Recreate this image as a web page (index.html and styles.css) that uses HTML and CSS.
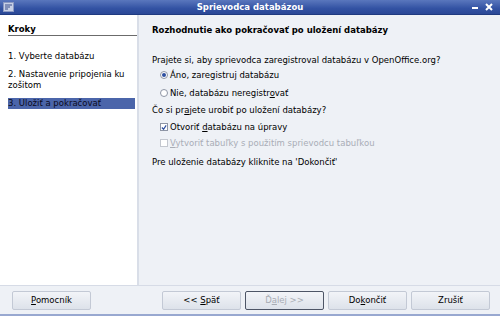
FILE: index.html
```html
<!DOCTYPE html>
<html>
<head>
<meta charset="utf-8">
<link rel="stylesheet" href="styles.css">
</head>
<body>
<div class="window">
  <div class="titlebar">
    <div class="appicon">
      <svg width="11" height="10" viewBox="0 0 11 10"><rect x="0.5" y="0.5" width="10" height="9" fill="#c7d0e6" stroke="#8b99c2"/><path d="M2 3h7M2 5h5M2 7h3" stroke="#3a4f8c" stroke-width="1"/></svg>
    </div>
    <div class="title">Sprievodca databázou</div>
    <div class="controls">
      <span class="min"></span>
      <svg width="8" height="8" viewBox="0 0 8 8"><path d="M1 1L7 7M7 1L1 7" stroke="#fff" stroke-width="2"/></svg>
    </div>
  </div>
  <div class="main">
    <div class="sidebar">
      <div class="steps-title">Kroky</div>
      <div class="step">1. Vyberte databázu</div>
      <div class="step">2. Nastavenie pripojenia ku<br>zošitom</div>
      <div class="step active">3. Uložiť a pokračovať</div>
    </div>
    <div class="content">
      <div class="heading">Rozhodnutie ako pokračovať po uložení databázy</div>
      <div class="q q1">Prajete si, aby sprievodca zaregistroval databázu v OpenOffice.org?</div>
      <div class="opt o1"><span class="radio on"></span><span>Áno, zaregistruj databázu</span></div>
      <div class="opt o2"><span class="radio"></span><span>Nie, databázu neregistr<u>o</u>vať</span></div>
      <div class="q q2">Čo si pr<u>a</u>jete urobiť po uložení databázy?</div>
      <div class="opt o3"><span class="check on"><svg width="7" height="7" viewBox="0 0 7 7"><path d="M1 3.5L3 5.5L6 1" stroke="#2d4fa0" stroke-width="1.4" fill="none"/></svg></span><span>Otvoriť <u>d</u>atabázu na úpravy</span></div>
      <div class="opt o4 disabled"><span class="check"></span><span><u>V</u>ytvoriť tabuľky s použitím sprievodcu tabuľkou</span></div>
      <div class="q q3">Pre uloženie databázy kliknite na 'Dokončiť'</div>
    </div>
  </div>
  <div class="footer">
    <button class="btn"><u>P</u>omocník</button>
    <div class="spacer"></div>
    <button class="btn">&lt;&lt; <u>S</u>päť</button>
    <button class="btn focused disabled">Ď<u>a</u>lej &gt;&gt;</button>
    <button class="btn">Do<u>k</u>ončiť</button>
    <button class="btn">Zrušiť</button>
  </div>
</div>
</body>
</html>
```
FILE: styles.css
```css
* { box-sizing: border-box; }
html, body { margin: 0; padding: 0; }
body {
  width: 500px; height: 316px; overflow: hidden;
  font-family: "DejaVu Sans", sans-serif;
  font-size: 8.5px;
  color: #000;
  background: #eef1f6;
}
.window { width: 500px; height: 316px; display: flex; flex-direction: column; border-bottom: 2px solid #98a8d0; }
.titlebar {
  height: 15px; flex: none;
  background: linear-gradient(#5a77bd, #3352a3 60%, #2a4896);
  display: flex; align-items: center; color: #fff;
  border-bottom: 1px solid #1f3a80;
}
.appicon { width: 20px; padding-left: 3px; display: flex; align-items: center; }
.title { flex: 1; text-align: center; font-weight: bold; font-size: 8.5px; padding-left: 8px; }
.controls { width: 28px; display: flex; align-items: center; gap: 7px; padding-right: 4px; }
.min { width: 6px; height: 2px; background: #fff; margin-top: 2px; }
.main { flex: 1; display: flex; border-bottom: 1px solid #d6dbe6; }
.sidebar {
  width: 139px; flex: none; background: #fff;
  border-right: 2px solid #d9dee8;
  padding: 9px 0 0 8px;
}
.steps-title {
  font-weight: bold; border-bottom: 1px solid #6b6b6b;
  padding-bottom: 0; margin-bottom: 15px; line-height: 11px;
}
.step { line-height: 11px; margin-bottom: 7px; margin-right: 2px; }
.step.active { background: #4b65aa; color: #0a0a20; }
.content { flex: 1; padding: 9px 10px 0 13px; }
.heading { font-weight: bold; line-height: 12px; }
.q { line-height: 12px; }
.q1 { margin-top: 18px; margin-bottom: 1px; }
.q2 { margin-top: 3px; margin-bottom: 3px; }
.q3 { margin-top: 5px; }
.opt { display: flex; align-items: center; line-height: 16px; padding-left: 8px; }
.o1 { margin-bottom: 2px; }
.opt.disabled { color: #a9adb6; }
.radio {
  width: 8px; height: 8px; border-radius: 50%; border: 1px solid #8e95a5; background: #fff;
  margin-right: 2px; display: inline-flex; align-items: center; justify-content: center;
}
.radio.on::after { content: ""; width: 4px; height: 4px; border-radius: 50%; background: #2d4fa0; }
.check {
  width: 8px; height: 8px; border: 1px solid #8e95a5; background: #fff; margin-right: 2px;
  display: inline-flex; align-items: center; justify-content: center;
}
.opt.disabled .check { border-color: #c3c7cf; }
.footer { height: 28px; flex: none; display: flex; align-items: center; padding: 0 10px 0 12px; gap: 4px; }
.spacer { flex: 1; }
.btn {
  width: 79px; height: 19px; font: inherit; font-size: 8.5px; color: #000;
  background: linear-gradient(#f2f4f8, #dde2ea);
  border: 1px solid #c3c9d5; border-radius: 2px; padding: 0;
}
.btn.focused { border-color: #4d5566; }
.btn.disabled { color: #a8acb4; }
```
